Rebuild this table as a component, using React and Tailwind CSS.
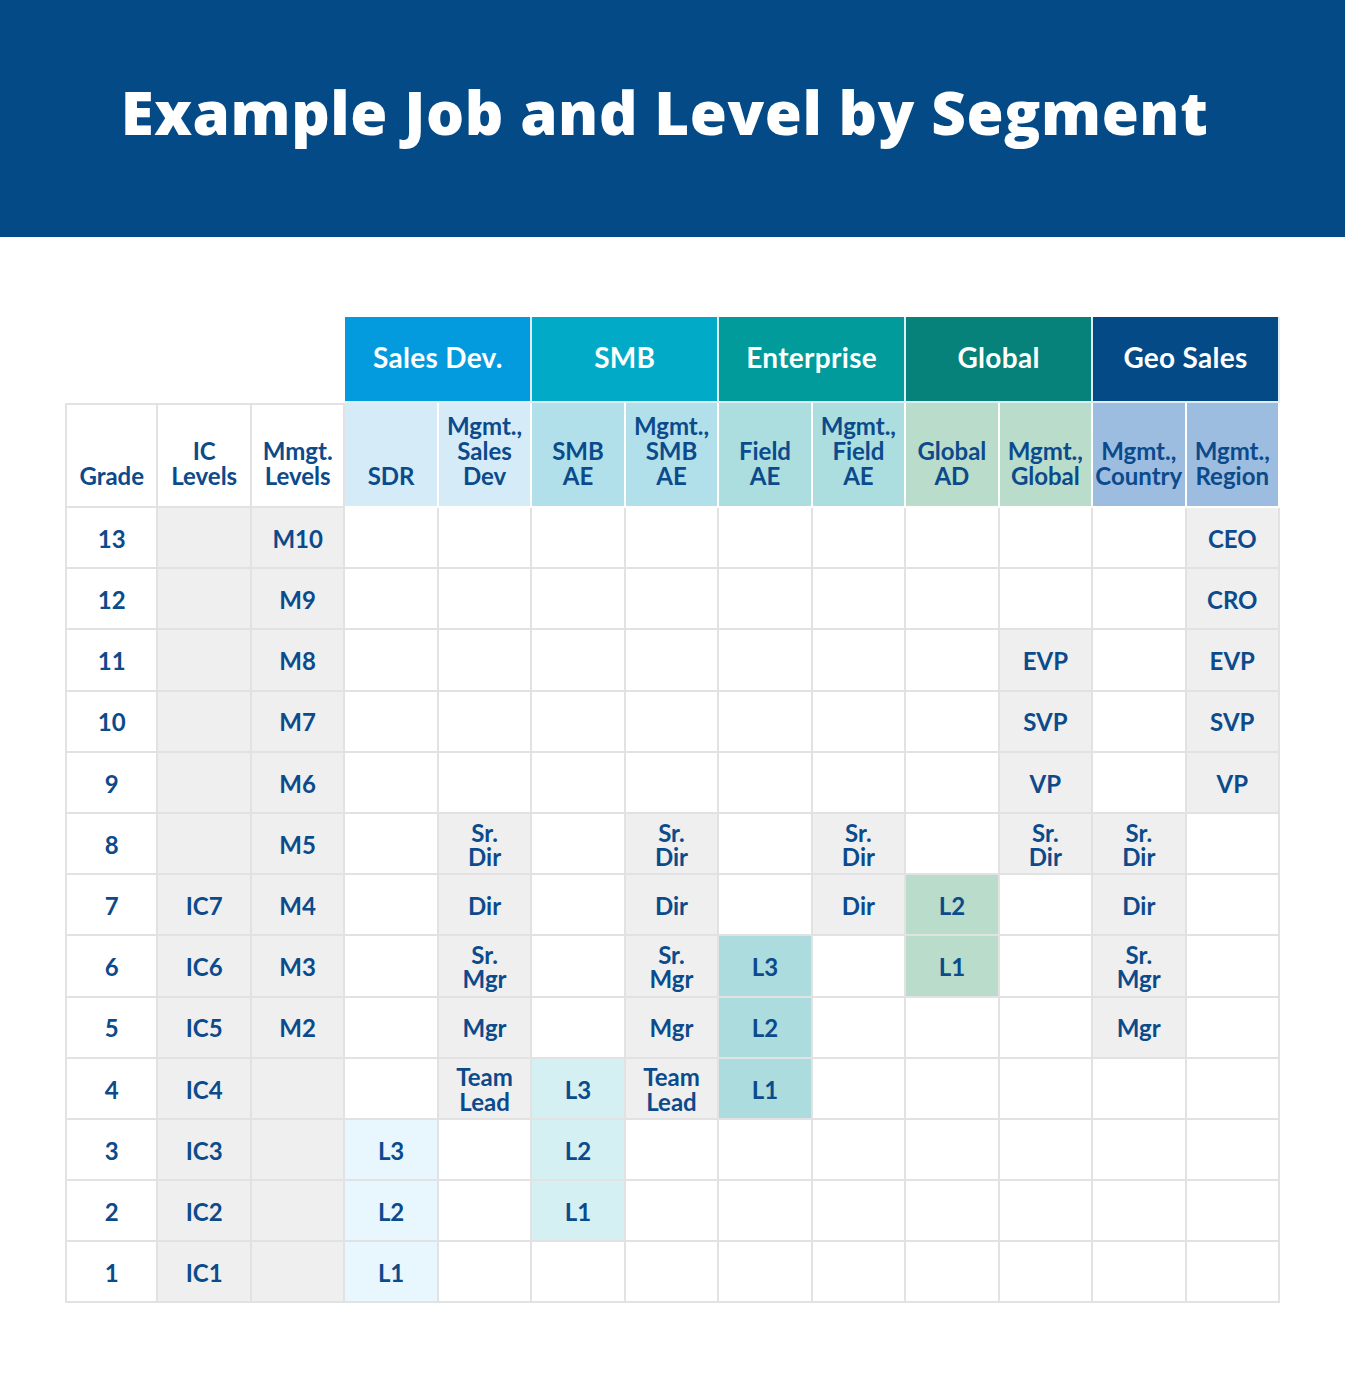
import React from "react";

const BG = {
  w: "bg-white",
  g: "bg-[#efefef]",
  s: "bg-[#e7f7fd]",
  m: "bg-[#d4f0f3]",
  f: "bg-[#acdcdd]",
  a: "bg-[#badcca]",
};

const segments = [
  { name: "Sales Dev.", cls: "bg-[#039bdd]" },
  { name: "SMB", cls: "bg-[#01aac6]" },
  { name: "Enterprise", cls: "bg-[#009b9a]" },
  { name: "Global", cls: "bg-[#06827a]" },
  { name: "Geo Sales", cls: "bg-[#034a86]" },
];

const subHeads = [
  { t: ["SDR"], cls: "bg-[#d5ebf7]" },
  { t: ["Mgmt.,", "Sales", "Dev"], cls: "bg-[#d5ebf7]" },
  { t: ["SMB", "AE"], cls: "bg-[#b2e0ea]" },
  { t: ["Mgmt.,", "SMB", "AE"], cls: "bg-[#b2e0ea]" },
  { t: ["Field", "AE"], cls: "bg-[#acdedf]" },
  { t: ["Mgmt.,", "Field", "AE"], cls: "bg-[#acdedf]" },
  { t: ["Global", "AD"], cls: "bg-[#badcca]" },
  { t: ["Mgmt.,", "Global"], cls: "bg-[#badcca]" },
  { t: ["Mgmt.,", "Country"], cls: "bg-[#9dbde0]" },
  { t: ["Mgmt.,", "Region"], cls: "bg-[#9dbde0]" },
];

// each row: grade, IC, Mmgt, then cells 4..13 as {col: [text, bg]}
const rows = [
  ["13", "", "M10", { 13: ["CEO", "g"] }],
  ["12", "", "M9", { 13: ["CRO", "g"] }],
  ["11", "", "M8", { 11: ["EVP", "g"], 13: ["EVP", "g"] }],
  ["10", "", "M7", { 11: ["SVP", "g"], 13: ["SVP", "g"] }],
  ["9", "", "M6", { 11: ["VP", "g"], 13: ["VP", "g"] }],
  ["8", "", "M5", { 5: ["Sr.|Dir", "g"], 7: ["Sr.|Dir", "g"], 9: ["Sr.|Dir", "g"], 11: ["Sr.|Dir", "g"], 12: ["Sr.|Dir", "g"] }],
  ["7", "IC7", "M4", { 5: ["Dir", "g"], 7: ["Dir", "g"], 9: ["Dir", "g"], 10: ["L2", "a"], 12: ["Dir", "g"] }],
  ["6", "IC6", "M3", { 5: ["Sr.|Mgr", "g"], 7: ["Sr.|Mgr", "g"], 8: ["L3", "f"], 10: ["L1", "a"], 12: ["Sr.|Mgr", "g"] }],
  ["5", "IC5", "M2", { 5: ["Mgr", "g"], 7: ["Mgr", "g"], 8: ["L2", "f"], 12: ["Mgr", "g"] }],
  ["4", "IC4", "", { 5: ["Team|Lead", "g"], 6: ["L3", "m"], 7: ["Team|Lead", "g"], 8: ["L1", "f"] }],
  ["3", "IC3", "", { 4: ["L3", "s"], 6: ["L2", "m"] }],
  ["2", "IC2", "", { 4: ["L2", "s"], 6: ["L1", "m"] }],
  ["1", "IC1", "", { 4: ["L1", "s"] }],
];

function Cell({ text, bg, first }) {
  const lines = text ? text.split("|") : [];
  return (
    <div
      className={`flex flex-col items-center justify-center border-r-2 border-b-2 border-[#e2e2e2] pt-[3px] text-[24px] font-bold leading-[1.02] text-[#0b4a8b] ${BG[bg]} ${first ? "border-l-2" : ""}`}
    >
      {lines.map((l, i) => (
        <span key={i}>{l}</span>
      ))}
    </div>
  );
}

export default function App() {
  return (
    <div className="min-h-[1394px] bg-white" style={{ fontFamily: "Lato, 'Open Sans', sans-serif" }}>
      <header className="flex h-[237px] items-center justify-center bg-[#034a86] pb-[14px] pr-[16px]">
        <h1 className="font-['Open_Sans',sans-serif] text-[60px] font-extrabold leading-none tracking-[0.6px] text-white">
          Example Job and Level by Segment
        </h1>
      </header>

      <div className="ml-[65px] mt-[80px] w-[1215px]">
        {/* segment row */}
        <div className="grid h-[86px] grid-cols-[repeat(13,minmax(0,1fr))]">
          <div className="col-span-3" />
          {segments.map((s) => (
            <div
              key={s.name}
              className={`col-span-2 flex items-center justify-center border-r-2 border-b-2 border-[#dfeef2] pb-[4px] text-[28px] font-bold tracking-[0.3px] text-white ${s.cls}`}
            >
              {s.name}
            </div>
          ))}
        </div>

        {/* sub header row */}
        <div className="grid h-[105px] grid-cols-[repeat(13,minmax(0,1fr))] text-[24px] font-bold leading-[1.04] text-[#0b4a8b]">
          <div className="flex items-end justify-center border-2 border-[#e2e2e2] pb-[17px]">Grade</div>
          <div className="flex flex-col items-center justify-end border-t-2 border-r-2 border-b-2 border-[#e2e2e2] pb-[17px]">
            <span>IC</span>
            <span>Levels</span>
          </div>
          <div className="flex flex-col items-center justify-end border-t-2 border-r-2 border-b-2 border-[#e2e2e2] pb-[17px]">
            <span>Mmgt.</span>
            <span>Levels</span>
          </div>
          {subHeads.map((h, i) => (
            <div
              key={i}
              className={`flex flex-col items-center justify-end border-r-2 border-b-2 border-white pb-[17px] ${h.cls}`}
            >
              {h.t.map((l) => (
                <span key={l}>{l}</span>
              ))}
            </div>
          ))}
        </div>

        {/* data rows */}
        <div className="grid auto-rows-[61.2px] grid-cols-[repeat(13,minmax(0,1fr))]">
          {rows.map(([grade, ic, mg, rest]) => (
            <React.Fragment key={grade}>
              <Cell text={grade} bg="w" first />
              <Cell text={ic} bg="g" />
              <Cell text={mg} bg="g" />
              {[4, 5, 6, 7, 8, 9, 10, 11, 12, 13].map((c) => (
                <Cell key={c} text={rest[c] ? rest[c][0] : ""} bg={rest[c] ? rest[c][1] : "w"} />
              ))}
            </React.Fragment>
          ))}
        </div>
      </div>
    </div>
  );
}
